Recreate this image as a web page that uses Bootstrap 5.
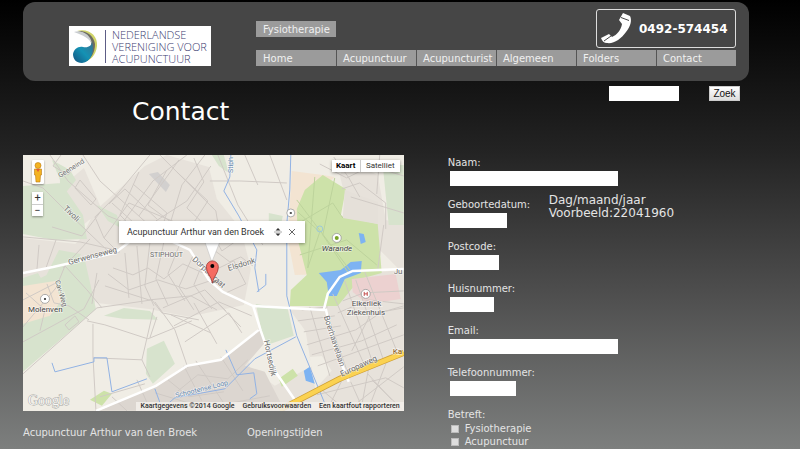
<!DOCTYPE html>
<html lang="nl">
<head>
<meta charset="utf-8">
<meta name="viewport" content="width=device-width, initial-scale=1">
<title>Contact</title>
<link href="https://cdn.jsdelivr.net/npm/bootstrap@5.3.0/dist/css/bootstrap.min.css" rel="stylesheet">
<style>
body{font-family:"DejaVu Sans",Verdana,sans-serif;font-size:10px;line-height:14px;color:#e4e4e4;background:linear-gradient(#000 0,#141414 85px,#232323 150px,#4d4d4d 290px,#7d7f7e 449px) #7d7f7e;min-height:100vh;overflow:hidden}
a{color:inherit;text-decoration:none}
.page{padding:2px 51px 0 23px}
.masthead{background:#464646;border-radius:12px;padding:7px 13px 15px 46px}
.brand{flex:0 0 142px;margin:17px 45px 0 0;height:40px}
.tile{background:#9b9b9b;color:#f0f0f0;height:16px;line-height:17px;padding-left:7px;white-space:nowrap}
.tile-single{width:80px;margin-top:12px}
.menu{display:grid;grid-template-columns:repeat(6,1fr);margin-top:2px}
.menu li+li{border-left:1px solid #555}
.menu li+li .tile{padding-left:6px}
.phone{width:140px;height:39px;border:1px solid #ddd;border-radius:3px;font-size:12px;font-weight:700;color:#fff;padding-left:4px}
.phone svg{width:32px;height:32px;margin-right:6px}
.title-row{padding:5px 9px 0 109px}
h1{font-size:25px;line-height:32px;color:#fff;margin:10px 0 27px}
.box{background:#fff;border:0;border-radius:0;height:15px;min-height:0;padding:0 2px;font-size:10px;line-height:14px}
.find .box{width:70px;margin-right:30px}
.find button{width:31px;height:15px;border:1px solid #ccc;border-radius:0;background:linear-gradient(#fff,#ddd);padding:0;font:10px/12px "Liberation Sans",sans-serif;color:#111}
.left{flex:0 0 58.5%;padding-right:44px}
.map{position:relative;aspect-ratio:381/256;overflow:hidden;background:#f0ede5;font-family:Roboto,sans-serif;color:#333}
.map>svg{display:block;width:100%;height:100%}
.map button{border:0;background:#fff;padding:0;color:#333}
.types{position:absolute;right:4px;top:5px;box-shadow:0 1px 3px #0006;height:12px;font-size:8px;line-height:12px}
.types button{width:39px}
.types button:first-child{width:29px;font-weight:700;color:#000;border-right:1px solid #ccc}
.zooms{position:absolute;left:9px;top:37px;width:11px;box-shadow:0 1px 2px #0006;font-size:11px;line-height:12px}
.zooms button{height:12px}
.zooms button+button{border-top:1px solid #ccc}
.pegman{position:absolute;left:9px;top:5px;width:12px;height:24px;box-shadow:0 1px 2px #0006;border-radius:1px}
.pegman svg{display:block}
.bubble{position:absolute;left:96px;top:66px;width:186px;height:22px;background:#fff;box-shadow:0 1px 3px #0006;font-size:9px;padding:0 8px}
.bubble button{width:10px;height:12px;line-height:0}
.credits{position:absolute;right:0;bottom:0;background:#f3f0ebd9;height:9px;line-height:9px;font-size:7px;font-weight:500;padding:0 4px;gap:8px;white-space:nowrap;color:#333}
.below{margin-top:15px}
.below>:first-child{flex:0 0 224px}
.field{margin-bottom:12px}
.fields{padding-top:1px}
.field label,.group{display:block}
.field .box{display:block;margin-left:2px;margin-top:1px}
.wide{width:168px}.date{width:57px}.post{width:49px}.house{width:44px}.tel{width:66px}
.date-col{width:101px}
.hint{font-size:12px;line-height:13px;margin-top:-4px}
.tick{gap:6px;padding-left:3px;line-height:13px}
.tick input{appearance:none;width:8px;height:8px;margin:0;background:#ddd;border:1px solid #bbb}
</style>
<script src="https://cdn.jsdelivr.net/npm/bootstrap@5.3.0/dist/js/bootstrap.bundle.min.js"></script>
</head>
<body>
<div class="page">
<header class="masthead d-flex">
  <a class="brand" href="#" aria-label="Nederlandse Vereniging voor Acupunctuur">
    <svg width="142" height="40" viewBox="0 0 142 40">
      <defs><linearGradient id="drop" x1="1" y1="0" x2="0" y2="1"><stop offset="0" stop-color="#3c6f8e"/><stop offset=".5" stop-color="#1492b4"/><stop offset="1" stop-color="#14527f"/></linearGradient></defs>
      <path fill="#fff" d="M0 0h142v40H0z"/>
      <path fill="#cfd368" d="M8 5c12-3 21 5 20 15-1 9-6 14-13 16 7-5 10-11 10-18C24 10 18 5 8 5z"/>
      <path fill="#6c6b62" d="M8 5c10-1 17 5 18 13 0 9-4 15-10 18l6-14C24 14 17 6 8 5z"/>
      <path fill="#c9cdd0" d="M5 6c9-2 17 3 18 12-2-5-9-9-18-12z"/>
      <path fill="url(#drop)" d="M23 15c3 11-1 21-10 22-6 0-9-4-9-9 1-5 5-8 10-7s9-1 9-6z"/>
      <path stroke="#5d5d86" d="M36.500 4v33"/>
      <g font-family="Open Sans,sans-serif" font-size="11" font-weight="300" fill="#3b3b70"><text x="43" y="13">NEDERLANDSE</text><text x="43" y="25">VERENIGING VOOR</text><text x="43" y="37">ACUPUNCTUUR</text></g>
    </svg>
  </a>
  <div class="flex-grow-1">
    <div class="d-flex justify-content-between">
      <a class="tile tile-single" href="#">Fysiotherapie</a>
      <a class="phone d-flex align-items-center" href="tel:0492574454">
        <svg viewBox="0 0 32 32"><path fill="#fff" d="M22 0l7 3c2 4 1 10-4 16-5 7-12 12-19 11-3 0-5-2-6-5l8-4 3 3c5-2 9-7 10-13l-3-4z"/><path d="M20 4.500l8 3M3 28l7-5" stroke="#464646" fill="none"/></svg>0492-574454
      </a>
    </div>
    <nav><ul class="menu list-unstyled mb-0">
      <li><a class="tile d-block" href="#">Home</a></li><li><a class="tile d-block" href="#">Acupunctuur</a></li><li><a class="tile d-block" href="#">Acupuncturist</a></li><li><a class="tile d-block" href="#">Algemeen</a></li><li><a class="tile d-block" href="#">Folders</a></li><li><a class="tile d-block" href="#">Contact</a></li>
    </ul></nav>
  </div>
</header>

<div class="title-row d-flex justify-content-between align-items-start">
  <h1 class="fw-normal">Contact</h1>
  <form class="find d-flex"><input class="box" type="search" aria-label="Zoekterm"><button type="button">Zoek</button></form>
</div>

<main class="d-flex align-items-start">
  <section class="left">
    <div class="map">
      <svg viewBox="23 155 381 256" preserveAspectRatio="xMidYMid slice" role="img" aria-label="Kaart van Stiphout">
        <path fill="#f0ede5" d="M23 155h381v256H23z"/>
        <g fill="#e7e2db">
          <path d="M95 211l50-45 22-11 42 12 8 32 24 30 10 40-7 36-55 12-40-8-52-6-22-25-8-25 14-15z"/>
          <path d="M23 238l90 10-14 35-6 28-35-28-35 4z"/>
          <path d="M340 175l8-14 30 14 8 45 18 4v46l-62 5-8 30-32 3 17 103h-89l-9-25 30-25 150-10v-80l-50-50z"/>
          <path d="M290 310l36-2 20-30 58-8v141H296l36-40-30-45z"/>
          <path d="M72 178l12-10 18 42-28 22-14-25z"/>
        </g>
        <path fill="#f0ede5" d="M247 340l26-10 20-16 20 52-38 20-25-18z"/>
        <path fill="#dcd6d0" d="M99 411l56-25 30-20 35-6 40-32 5 15-20 23 20 6 6 12 14 27z"/>
        <path fill="#d7e3cd" d="M23 186l38-3 22 32 4 24-33 1-31-6zM60 180l-8-20 18 10 6 10-16 20zM23 287l61-31 12 53-73 63zM104 316l20-8 26 3 8 9-35-1zM147 349l17-8 11 23-22 20-7-10zM97 205l20 10 4 13-13-7zM256 304l32 5 6 27-29 10zM269 213l14 3-3 14-11-3zM59 250l22 4-9 19-26 3zM23 278l15-5 8 14-23 12zM383 165h21v60h-15zM212 155h12l5 18-10-7z"/>
        <path fill="#f3e4d2" d="M23 286l32-5 6 20-11 15-27 8zM292 171l31 4 12 2-27 24-13 28 16 34 20 11-36 1-7-36z"/>
        <path fill="#cde2a9" d="M305 190l18-15 23 14-5 27 37 8 4 49-22 6-22 27h-48l1-16 16-15-9-35-1-31zM90 400l14-9 8 3-10 12zM279 379l14-10 5 7-16 11z"/>
        <path fill="#e5e0d9" d="M345 190l33 12v22l-35-6z"/>
        <path fill="#d2d0cf" d="M149 174l9-2 12 13-4 7z"/>
        <path fill="#ecd1d0" d="M352 279l44-5 5 25-33 5-15-12z"/>
        <path fill="#7db3f2" d="M319 273l22-3 10-8 11-1-1 12-16 6-8 17h-8l-2-14zM359 233l5 1 2 8-5 2zM304 371l6-4 5 17-9-3z"/>
        <g fill="none" stroke="#d0cac5" stroke-width="1">
          <path d="M23 181l20 7 25 25 42 40 10-1M50 155l18 26 40 35 15 6M83 155l17 26 50 45M102 210l-20 26-30-9M150 155l-35 42-20 20 9 21 14 14M187 155l-34 26-29 40M160 155l56 56 5 30M205 155l-23 30-14 46M211 166l-24 35-31 20M177 172l31 29-13 20M133 184l34 29-6 18M112 203l32 29M139 172l-19 43 16 16M167 170l-19 35 27 20M179 160l-40 56M104 238l25-35 60 25M109 204l16-15 32 30M194 158l10 24-17 26 17 16"/>
          <path d="M23 237l57 5 35 8M39 245l-2 24M56 240l-10 28M90 239l-27 29M97 273l-5 31M65 266l22 24 15 18M23 327l33-39 9-22M23 342l61-33 15-29M23 374l74-66 55-8 10 13 37 7M87 321l18 4 43 14 44-18M93 324v32l3 55M93 358l49 2 12-52M142 360l8 17M155 302l20 28 13 38M47 284l7 19 15 3 20 14M26 293l19 17-5 21M150 338l7-21"/>
          <path d="M113 268l20 7 15-7 16 11 19-15 20 9M125 253l4 45M137 246l5 58M150 243l-5 43 9 20M164 242l-8 37 12 26M180 244l-12 30 17 27M193 256l-14 31 15 23M202 265l-8 20 18 24M108 274l21 16 29-10 28 9 27-9M105 286l44 14 42-4 26 14M163 308l42-18 21 21M174 326l45-24 33 14M185 342l44-29 13 20M207 292l34 35M194 303l23 41M171 315l40 18M214 250l16 12 11-5 12 9M215 270l19-9 12 23-22 10M208 225l14 26 13-9"/>
          <path d="M23 300l35-18M61 155l-8 11 15 9 11-12M75 188l5-8 16 19-5 6zM218 155l20 50 25 40M270 155l17 45M210 181h30l47 2M245 155l13 30M320 164l27 14 24-12 33 10M342 189l18-6 26 20v26M351 197l53 16M348 176l12 21M380 155l-3 39M334 157l16 22M384 225l-6 45"/>
          <path d="M302 310l26-3M298 321l37-5M304 332l37-6M307 345l49-15 26-18 22-4M312 355l50-14 35-16M318 366l86-31M310 307l20 69M324 304l24 69M333 294l33 74M345 281l28 82M356 280l27 78M365 272l32 79M343 301l21-8 40-2M338 313l31-13 35 4M352 351l18-35 34-10M368 374l24 26M351 382l13 29M322 390l25 21M317 395l69-17 18 10M342 381l-15 30M369 368l-8 43M388 359l-20 52M404 367l-57 44M372 380l32 31"/>
          <path d="M100 397l45-13M137 380l12 27M168 380l21 17 35-5M184 366l18 35M196 361l31 47M221 357l22 34M177 392l21-17 30 4 20-19M155 393l50 15 65-12M112 397l15 14"/>
          <path d="M65 325l10-9 4 6-10 8z"/>
        </g>
        <g fill="none" stroke="#bdd39c"><path d="M297 200l53 70M315 177l-7 91M335 178l-12 57 25 37M296 225l37-22 10 15M300 255l47-15 30 25M308 268l12-36-22-20"/><circle cx="320" cy="229" r="3" stroke="#9cc9d8"/></g>
        <path fill="none" stroke="#91b2e4" d="M291 155l-1 35-3 34v72l10 40 29 70M231 155l-1 22-6 14 15 25 18 34-2 18 4 24M52 363l3 9 39-10v-4h13l5 34 35-13M155 389l8 22M161 410l14-12 50-9 30-30 41-22M226 350l11 25 17-2 3 21-7 5M257 292l9-7V274"/>
        <path fill="none" stroke="#fff" stroke-width="2.500" d="M23 273l30-6 62-14 17-13 30-3 28 13 19 30 14 12 30 14 71 4 4-16 12-17 13-6 51-2M96 411l60-25 31-20 34-6 38-30M253 305l8 26 14 40 22 32M326 309l8 35 15 38"/>
        <path d="M280 410l60-31 64-26" fill="none" stroke="#ce9f36" stroke-width="6"/>
        <path d="M280 410l60-31 64-26" fill="none" stroke="#fbd251" stroke-width="4.500"/>
        <g font-family="Roboto,sans-serif" font-size="8" fill="#6c6c6c" stroke="#fff" stroke-opacity=".55" stroke-width="1.500" paint-order="stroke">
          <text x="60" y="178" font-size="7" transform="rotate(-32 60 178)">Geeneind</text>
          <text x="63" y="209" transform="rotate(44 63 209)">Tivoli</text>
          <text x="69" y="265" transform="rotate(-15 69 265)">Gerwenseweg</text>
          <text x="150" y="257" font-size="7">STIPHOUT</text>
          <text x="192" y="260" transform="rotate(43 192 260)">Dorpsstraat</text>
          <text x="229" y="271" transform="rotate(-17 229 271)">Elsdonk</text>
          <text x="233" y="173" font-size="7" transform="rotate(-90 233 173)" fill="#668bae">Stiph</text>
          <text x="55" y="281" font-size="7" transform="rotate(73 55 281)">Cav-Weg</text>
          <text x="28" y="312" fill="#444">Molenven</text>
          <text x="322" y="251" fill="#444" font-style="italic">Warande</text>
          <text x="352" y="306" fill="#555">Elkerliek</text><text x="347" y="315" fill="#555">Ziekenhuis</text>
          <text x="324" y="317" transform="rotate(72 324 317)">Boerhaavelaan</text>
          <text x="264" y="341" transform="rotate(78 264 341)">Hortsedijk</text>
          <text x="342" y="377" transform="rotate(-25 342 377)">Europaweg</text>
          <text x="176" y="398" font-size="7" transform="rotate(-14 176 398)" fill="#6689b0">Schootense Loop</text>
          <text x="394" y="274">Ju</text><text x="393" y="354" fill="#8a5b21">Ka</text>
        </g>
        <text x="28" y="405" font-family="Liberation Serif,serif" font-size="14" fill="#f7f7f5" stroke="#a8a8a4" stroke-width="1" paint-order="stroke">Google</text>
        <g fill="#fff" stroke="#999" stroke-width=".8"><circle cx="45" cy="299" r="4.500"/><circle cx="291" cy="213" r="4"/><circle cx="337" cy="238" r="4.500"/><circle cx="366" cy="294" r="4.500"/></g>
        <path fill="#555" d="M44 298h2v2h-2zM290 212h2v2h-2z"/><circle cx="337" cy="238" r="2" fill="#79a428"/>
        <path d="M364.500 292v4M367.500 292v4M364.500 294h3" stroke="#c34b4b"/>
        <path d="M212 283l4-2" stroke="#888" stroke-width="2"/>
        <path fill="#fff" stroke="#bbb" stroke-width=".5" d="M205 242l7 20 8-20z"/>
        <path fill="#f56b62" stroke="#9f3834" stroke-width=".8" d="M212.500 283c-1-7-6-9-6-16a6 6 0 0 1 12 0c0 7-5 9-6 16z"/><circle cx="212.500" cy="266" r="2"/>
      </svg>
      <button class="pegman" type="button" aria-label="Street View"><svg width="12" height="24" viewBox="0 0 12 24"><g fill="#f4b321" stroke="#ba7812" stroke-width=".6"><path d="M2.500 9h7v6H8.500l-.5 7H4l-.5-7h-1z"/><circle cx="6" cy="5.500" r="3"/></g><path d="M4 9l2 3 2-3z" fill="#e25b35"/></svg></button>
      <div class="zooms d-flex flex-column"><button type="button" aria-label="Inzoomen">+</button><button type="button" aria-label="Uitzoomen">−</button></div>
      <div class="types d-flex"><button type="button">Kaart</button><button type="button">Satelliet</button></div>
      <div class="bubble d-flex align-items-center"><span class="flex-grow-1">Acupunctuur Arthur van den Broek</span>
        <button type="button" class="me-1" aria-label="Route"><svg width="8" height="10" viewBox="0 0 8 10"><path d="M1.500 3.500L4 1l2.500 2.500zM1.500 6.500L4 9l2.500-2.500z" fill="#333"/><path d="M0 5h8" stroke="#aaa"/></svg></button>
        <button type="button" aria-label="Sluiten"><svg width="8" height="8" viewBox="0 0 8 8"><path d="M1 1l6 6M7 1L1 7" stroke="#666"/></svg></button>
      </div>
      <div class="credits d-flex"><span>Kaartgegevens ©2014 Google</span><a href="#">Gebruiksvoorwaarden</a><a href="#">Een kaartfout rapporteren</a></div>
    </div>
    <div class="below d-flex"><span>Acupunctuur Arthur van den Broek</span><span>Openingstijden</span></div>
  </section>

  <form class="fields flex-grow-1">
    <div class="field"><label for="naam">Naam:</label><input id="naam" class="box wide" type="text"></div>
    <div class="d-flex"><div class="field date-col"><label for="geb">Geboortedatum:</label><input id="geb" class="box date" type="text"></div><div class="hint">Dag/maand/jaar<br>Voorbeeld:22041960</div></div>
    <div class="field"><label for="post">Postcode:</label><input id="post" class="box post" type="text"></div>
    <div class="field"><label for="huis">Huisnummer:</label><input id="huis" class="box house" type="text"></div>
    <div class="field"><label for="email">Email:</label><input id="email" class="box wide" type="email"></div>
    <div class="field"><label for="tel">Telefoonnummer:</label><input id="tel" class="box tel" type="tel"></div>
    <span class="group">Betreft:</span>
    <div class="tick d-flex align-items-center"><input id="fysio" type="checkbox"><label for="fysio">Fysiotherapie</label></div>
    <div class="tick d-flex align-items-center"><input id="acu" type="checkbox"><label for="acu">Acupunctuur</label></div>
  </form>
</main>
</div>
</body>
</html>
